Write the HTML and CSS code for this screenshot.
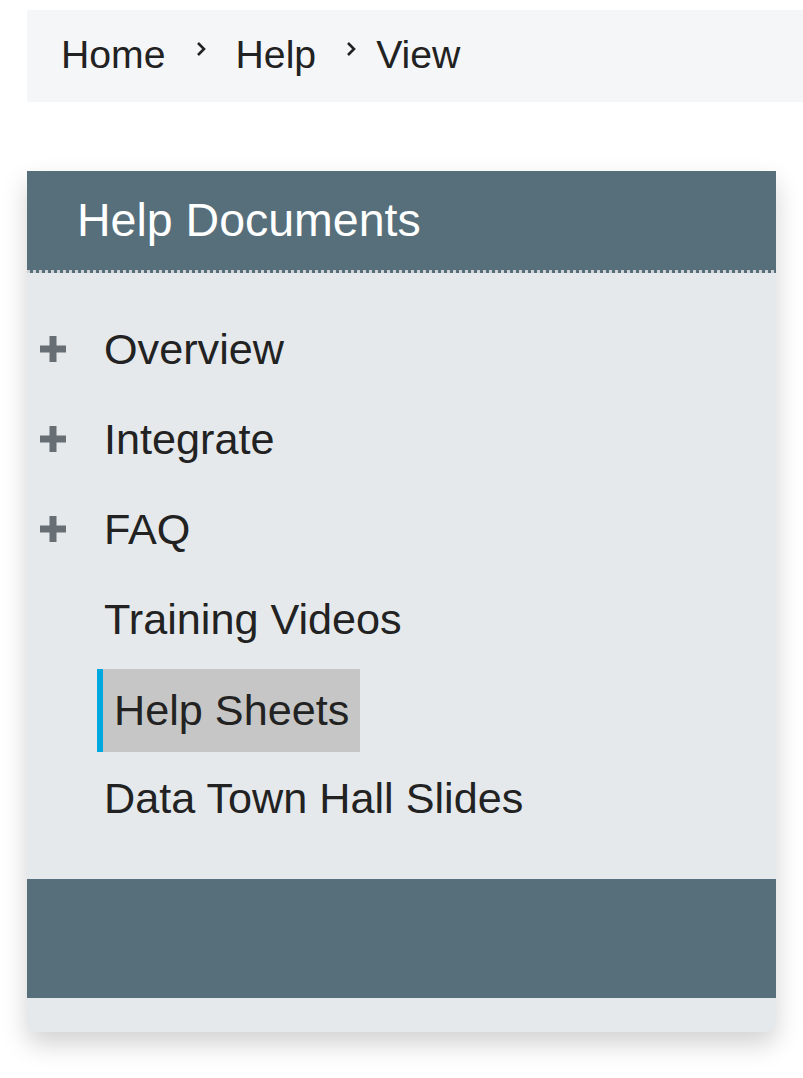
FILE: index.html
```html
<!DOCTYPE html>
<html lang="en">
<head>
    <meta charset="UTF-8">
    <meta name="viewport" content="width=device-width, initial-scale=1.0">
    <title>Help - View</title>
    <link rel="stylesheet" href="styles.css">
</head>
<body>
    <div class="page">
        <nav class="breadcrumb">
            <a href="#" class="crumb">Home</a>
            <span class="sep sep-first">
                <svg width="10" height="16" viewBox="0 0 10 16"><polyline points="2,2 8,8 2,14" fill="none" stroke="#222" stroke-width="2.6"/></svg>
            </span>
            <a href="#" class="crumb">Help</a>
            <span class="sep sep-last">
                <svg width="10" height="16" viewBox="0 0 10 16"><polyline points="2,2 8,8 2,14" fill="none" stroke="#222" stroke-width="2.6"/></svg>
            </span>
            <span class="crumb">View</span>
        </nav>

        <div class="card">
            <div class="card-header">Help Documents</div>
            <div class="card-divider"></div>
            <ul class="doc-list">
                <li class="doc-item">
                    <span class="toggle"><svg width="26" height="26" viewBox="0 0 26 26"><rect x="9.5" y="0" width="7" height="26"/><rect x="0" y="9.5" width="26" height="7"/></svg></span>
                    <a href="#">Overview</a>
                </li>
                <li class="doc-item">
                    <span class="toggle"><svg width="26" height="26" viewBox="0 0 26 26"><rect x="9.5" y="0" width="7" height="26"/><rect x="0" y="9.5" width="26" height="7"/></svg></span>
                    <a href="#">Integrate</a>
                </li>
                <li class="doc-item">
                    <span class="toggle"><svg width="26" height="26" viewBox="0 0 26 26"><rect x="9.5" y="0" width="7" height="26"/><rect x="0" y="9.5" width="26" height="7"/></svg></span>
                    <a href="#">FAQ</a>
                </li>
                <li class="doc-item">
                    <span class="toggle"></span>
                    <a href="#">Training Videos</a>
                </li>
                <li class="doc-item active">
                    <span class="toggle"></span>
                    <a href="#">Help Sheets</a>
                </li>
                <li class="doc-item">
                    <span class="toggle"></span>
                    <a href="#">Data Town Hall Slides</a>
                </li>
            </ul>
            <div class="card-footer"></div>
        </div>
    </div>
</body>
</html>
```

FILE: styles.css
```css
* {
    margin: 0;
    padding: 0;
    box-sizing: border-box;
    font-family: 'Liberation Sans', Arial, sans-serif;
}

body {
    background-color: #ffffff;
    color: #222222;
}

a {
    color: inherit;
    text-decoration: none;
}

.page {
    padding: 10px 0 40px 27px;
}

.breadcrumb {
    display: flex;
    align-items: center;
    height: 92px;
    padding-left: 34px;
    padding-bottom: 2px;
    background-color: #f5f6f8;
    font-size: 39.2px;
    color: #222222;
}

.sep {
    display: flex;
    align-items: center;
    margin-top: -13px;
}

.sep-first {
    margin-left: 30px;
    margin-right: 30px;
}

.sep-last {
    margin-left: 30px;
    margin-right: 20px;
}

.card {
    width: 749px;
    margin-top: 69px;
    padding-bottom: 34px;
    background-color: #e5e9ec;
    border-radius: 0 0 11px 11px;
    box-shadow: 0 12px 26px rgba(0, 0, 0, 0.18);
}

.card-header {
    height: 99px;
    line-height: 99px;
    padding-left: 50px;
    background-color: #566f7b;
    color: #ffffff;
    font-size: 46.5px;
}

.card-divider {
    height: 3px;
    background: repeating-linear-gradient(90deg, #cfd3d6 0 3px, #566f7b 3px 6px);
}

.doc-list {
    list-style: none;
    padding: 31px 0 36px;
}

.doc-item {
    display: flex;
    align-items: center;
    height: 90px;
    font-size: 43.2px;
}

.toggle {
    display: flex;
    align-items: center;
    width: 77px;
    padding-left: 13px;
}

.toggle svg {
    fill: #686f74;
}

.doc-item.active {
    height: 83px;
    margin: 5px 0 1px;
}

.doc-item.active a {
    display: flex;
    align-items: center;
    height: 83px;
    margin-left: -7px;
    padding: 0 11px;
    border-left: 6px solid #00a8e0;
    background-color: #c6c6c6;
}

.card-footer {
    height: 119px;
    background-color: #566f7b;
}
```
